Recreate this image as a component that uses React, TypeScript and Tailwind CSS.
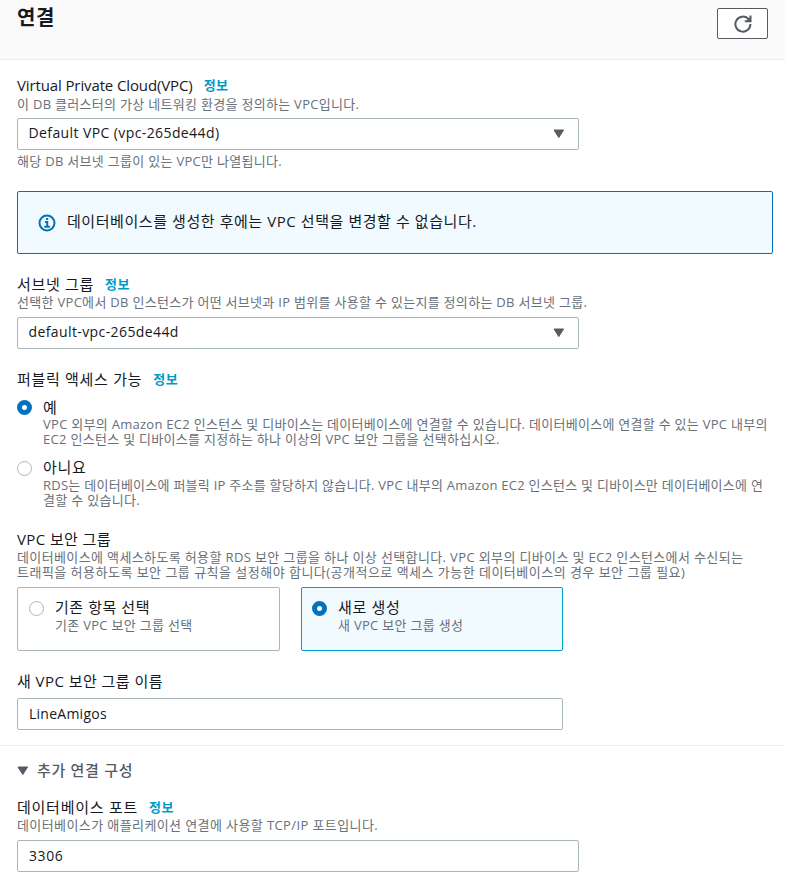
import { useState } from 'react';
import type { ReactNode } from 'react';

function Info() {
  return <a href="#" className="ml-[11px] text-[13px] font-bold tracking-[0.5px] text-[#0099c6]">정보</a>;
}

function Label({ children, info, className = '' }: { children: ReactNode; info?: boolean; className?: string }) {
  return (
    <div className={`flex h-[22px] items-center whitespace-nowrap text-[15px] leading-[22px] text-[#16191f] ${className}`}>
      <span>{children}</span>
      {info && <Info />}
    </div>
  );
}

function Hint({ children, className = '' }: { children: ReactNode; className?: string }) {
  return <p className={`whitespace-nowrap text-[13px] leading-[15px] tracking-[0.3px] text-[#687078] ${className}`}>{children}</p>;
}

function Caret() {
  return (
    <svg width="12" height="10" viewBox="0 0 12 10" className="shrink-0">
      <path d="M1 1h9.6L5.8 8.6z" fill="#545b64" stroke="#545b64" strokeLinejoin="round" />
    </svg>
  );
}

function SelectBox({ value }: { value: string }) {
  return (
    <button className="flex h-8 w-[562px] items-center justify-between rounded-[2px] border border-[#aab7b8] bg-white pl-[10.5px] pr-[13px] text-[14px] tracking-[0.4px] text-[#16191f]">
      <span className="pb-[3px]">{value}</span>
      <Caret />
    </button>
  );
}

function Radio({ checked, onChange }: { checked: boolean; onChange: () => void }) {
  return (
    <button role="radio" aria-checked={checked} onClick={onChange}
      className={checked
        ? 'block size-[15px] shrink-0 rounded-full border-[5px] border-[#0073bb] bg-white'
        : 'block size-[15px] shrink-0 rounded-full border border-[#aab7b8] bg-white'} />
  );
}

export default function App() {
  const [isPublic, setIsPublic] = useState(true);
  const [createNew, setCreateNew] = useState(true);
  const [groupName, setGroupName] = useState('LineAmigos');
  const [port, setPort] = useState('3306');

  return (
    <div className="h-[890px] w-[785px] overflow-hidden bg-white font-['Open_Sans','Noto_Sans_CJK_KR',sans-serif]">
      <header className="flex h-[60px] justify-between border-b border-[#eaeded] bg-[#fafafa] pl-[17px] pr-[17px]">
        <h1 className="mt-[6px] text-[20px] font-bold leading-6 tracking-[0.6px] text-[#16191f]">연결</h1>
        <button className="mt-2 flex h-[31px] w-[51px] items-center justify-center rounded-[2px] border border-[#545b64] bg-white">
          <svg width="18" height="18" viewBox="0 0 18 18" fill="none" stroke="#545b64" strokeWidth="2">
            <path d="M16.4 9A7.5 7.5 0 1 1 14.2 3.8L16 5.6" />
            <path d="M16.5 0.5V6.3H10.8" />
            <path d="M16.5 2V6.3H12z" fill="#545b64" stroke="none" />
          </svg>
        </button>
      </header>

      <main className="px-[17px] pt-[14px]">
        <Label info className="mb-px tracking-[-0.12px]">Virtual Private Cloud(VPC)</Label>
        <Hint className="mb-[6px]">이 DB 클러스터의 가상 네트워킹 환경을 정의하는 VPC입니다.</Hint>
        <SelectBox value="Default VPC (vpc-265de44d)" />
        <Hint className="mt-1">해당 DB 서브넷 그룹이 있는 VPC만 나열됩니다.</Hint>

        <div className="mr-[-5px] mt-[22px] flex h-[63px] items-center rounded-[2px] border border-[#0073bb] bg-[#f1faff] pl-[20px] text-[15px] tracking-[0.57px] text-[#16191f]">
          <svg width="18" height="18" viewBox="0 0 18 18" fill="none" stroke="#0073bb" strokeWidth="2" className="mr-[11px]">
            <circle cx="9" cy="9" r="7.5" />
            <path d="M8 5h2.2M7 8h2.2v4.8M6.3 12.8h5.6" />
          </svg>
          <span className="pb-[2px]">데이터베이스를 생성한 후에는 VPC 선택을 변경할 수 없습니다.</span>
        </div>

        <Label info className="mt-[19px] tracking-[0.7px]">서브넷 그룹</Label>
        <Hint className="mb-[7px]">선택한 VPC에서 DB 인스턴스가 어떤 서브넷과 IP 범위를 사용할 수 있는지를 정의하는 DB 서브넷 그룹.</Hint>
        <SelectBox value="default-vpc-265de44d" />

        <Label info className="mt-[19px] tracking-[0.7px]">퍼블릭 액세스 가능</Label>
        <div role="radiogroup" className="mt-[6px]">
          <div className="flex gap-[11px]">
            <div className="pt-1"><Radio checked={isPublic} onChange={() => setIsPublic(true)} /></div>
            <div>
              <Label className="mb-[-1px]">예</Label>
              <Hint><span className="tracking-[0.28px]">VPC 외부의 Amazon EC2 인스턴스 및 디바이스는 데이터베이스에 연결할 수 있습니다. 데이터베이스에 연결할 수 있는 VPC 내부의</span><br />EC2 인스턴스 및 디바이스를 지정하는 하나 이상의 VPC 보안 그룹을 선택하십시오.</Hint>
            </div>
          </div>
          <div className="mt-[9px] flex gap-[11px]">
            <div className="pt-[5px]"><Radio checked={!isPublic} onChange={() => setIsPublic(false)} /></div>
            <div>
              <Label className="tracking-[0.7px]">아니요</Label>
              <Hint><span className="tracking-[0.26px]">RDS는 데이터베이스에 퍼블릭 IP 주소를 할당하지 않습니다. VPC 내부의 Amazon EC2 인스턴스 및 디바이스만 데이터베이스에 연</span><br />결할 수 있습니다.</Hint>
            </div>
          </div>
        </div>

        <Label className="mt-5 tracking-[0.4px]">VPC 보안 그룹</Label>
        <Hint className="mb-[7px]">
          <span className="tracking-[0.37px]">데이터베이스에 액세스하도록 허용할 RDS 보안 그룹을 하나 이상 선택합니다. VPC 외부의 디바이스 및 EC2 인스턴스에서 수신되는</span><br />
          <span className="tracking-[0.48px]">트래픽을 허용하도록 보안 그룹 규칙을 설정해야 합니다(공개적으로 액세스 가능한 데이터베이스의 경우 보안 그룹 필요)</span>
        </Hint>
        <div role="radiogroup" className="flex gap-[21px]">
          <div className={`flex h-16 w-[263px] gap-[11px] rounded-[2px] border pl-[11px] pt-2 ${createNew ? 'border-[#aab7b8] bg-white' : 'border-[#00a1c9] bg-[#f1faff]'}`}>
            <div className="pt-[5px]"><Radio checked={!createNew} onChange={() => setCreateNew(false)} /></div>
            <div>
              <Label className="tracking-[0.55px]">기존 항목 선택</Label>
              <Hint>기존 VPC 보안 그룹 선택</Hint>
            </div>
          </div>
          <div className={`flex h-16 w-[262px] gap-[11px] rounded-[2px] border pl-[10px] pt-2 ${createNew ? 'border-[#00a1c9] bg-[#f1faff]' : 'border-[#aab7b8] bg-white'}`}>
            <div className="pt-[5px]"><Radio checked={createNew} onChange={() => setCreateNew(true)} /></div>
            <div>
              <Label className="tracking-[0.7px]">새로 생성</Label>
              <Hint>새 VPC 보안 그룹 생성</Hint>
            </div>
          </div>
        </div>

        <Label className="mb-[6px] mt-[19px] tracking-[0.45px]">새 VPC 보안 그룹 이름</Label>
        <input value={groupName} onChange={e => setGroupName(e.target.value)}
          className="block h-8 w-[546px] rounded-[2px] border border-[#aab7b8] px-[11px] pb-[2px] text-[14px] tracking-[0.25px] text-[#16191f] outline-none" />
      </main>

      <section className="mt-[15px] border-t border-[#eaeded] px-[17px] pt-[14px]">
        <button className="flex h-[22px] items-center gap-2 text-[15px] font-medium tracking-[0.7px] text-[#545b64]">
          <Caret />
          <span className="pb-[2px]">추가 연결 구성</span>
        </button>
        <Label info className="mt-[14px] tracking-[0.75px]">데이터베이스 포트</Label>
        <Hint className="mb-[7px]"><span className="tracking-[0.4px]">데이터베이스가 애플리케이션 연결에 사용할 TCP/IP 포트입니다.</span></Hint>
        <input value={port} onChange={e => setPort(e.target.value)}
          className="block h-8 w-[562px] rounded-[2px] border border-[#aab7b8] px-[11px] pb-[2px] text-[14px] tracking-[0.6px] text-[#16191f] outline-none" />
      </section>
    </div>
  );
}
